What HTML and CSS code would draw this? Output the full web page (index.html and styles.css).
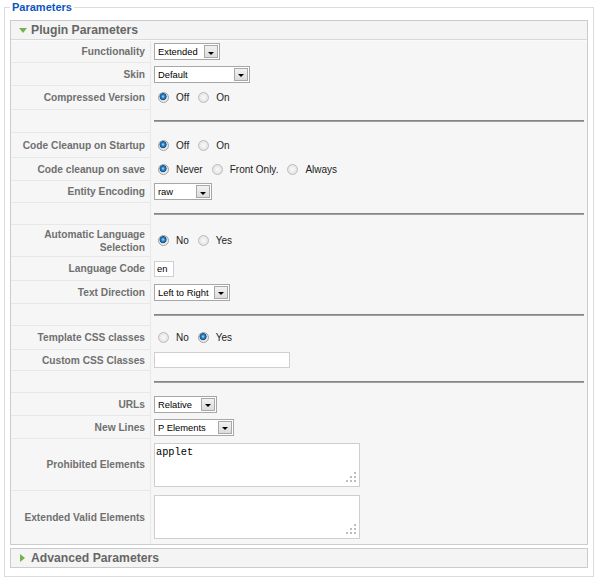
FILE: index.html
```html
<!DOCTYPE html>
<html>
<head>
<meta charset="utf-8">
<link rel="stylesheet" href="styles.css">
</head>
<body>
<fieldset class="params">
  <legend>Parameters</legend>
  <div class="panel">
    <h3 class="panel-title"><span class="tri tri-down"></span>Plugin Parameters</h3>
    <table class="paramlist">
      <tr class="h22"><td class="key">Functionality</td><td class="val"><span class="select w66"><span class="sel-text">Extended</span><span class="sel-btn"><span class="arrow"></span></span></span></td></tr>
      <tr class="h23"><td class="key">Skin</td><td class="val"><span class="select w96"><span class="sel-text">Default</span><span class="sel-btn"><span class="arrow"></span></span></span></td></tr>
      <tr class="h24"><td class="key">Compressed Version</td><td class="val radios"><input type="radio" class="radio" name="cv" checked><label>Off</label><input type="radio" class="radio" name="cv"><label>On</label></td></tr>
      <tr class="h23"><td class="key"></td><td class="val"><hr class="sep"></td></tr>
      <tr class="h25"><td class="key">Code Cleanup on Startup</td><td class="val radios"><input type="radio" class="radio" name="cs" checked><label>Off</label><input type="radio" class="radio" name="cs"><label>On</label></td></tr>
      <tr class="h23"><td class="key">Code cleanup on save</td><td class="val radios"><input type="radio" class="radio" name="cc" checked><label>Never</label><input type="radio" class="radio" name="cc"><label>Front Only.</label><input type="radio" class="radio" name="cc"><label>Always</label></td></tr>
      <tr class="h22"><td class="key">Entity Encoding</td><td class="val"><span class="select w58"><span class="sel-text">raw</span><span class="sel-btn"><span class="arrow"></span></span></span></td></tr>
      <tr class="h22"><td class="key"></td><td class="val"><hr class="sep"></td></tr>
      <tr class="h32"><td class="key">Automatic Language<br>Selection</td><td class="val radios low"><input type="radio" class="radio" name="al" checked><label>No</label><input type="radio" class="radio" name="al"><label>Yes</label></td></tr>
      <tr class="h24"><td class="key">Language Code</td><td class="val"><input type="text" class="text w20" value="en"></td></tr>
      <tr class="h23"><td class="key">Text Direction</td><td class="val"><span class="select w76"><span class="sel-text">Left to Right</span><span class="sel-btn"><span class="arrow"></span></span></span></td></tr>
      <tr class="h22"><td class="key"></td><td class="val"><hr class="sep"></td></tr>
      <tr class="h24"><td class="key">Template CSS classes</td><td class="val radios"><input type="radio" class="radio" name="tc"><label>No</label><input type="radio" class="radio" name="tc" checked><label>Yes</label></td></tr>
      <tr class="h21"><td class="key">Custom CSS Classes</td><td class="val"><input type="text" class="text w136" value=""></td></tr>
      <tr class="h22"><td class="key"></td><td class="val"><hr class="sep"></td></tr>
      <tr class="h23"><td class="key">URLs</td><td class="val"><span class="select w63"><span class="sel-text">Relative</span><span class="sel-btn"><span class="arrow"></span></span></span></td></tr>
      <tr class="h23"><td class="key">New Lines</td><td class="val"><span class="select w80"><span class="sel-text">P Elements</span><span class="sel-btn"><span class="arrow"></span></span></span></td></tr>
      <tr class="h52"><td class="key">Prohibited Elements</td><td class="val"><span class="ta-wrap"><textarea class="ta">applet</textarea><svg class="grip" width="12" height="12" viewBox="0 0 12 12"><rect x="9" y="1" width="2" height="2"/><rect x="5" y="5" width="2" height="2"/><rect x="9" y="5" width="2" height="2"/><rect x="1" y="9" width="2" height="2"/><rect x="5" y="9" width="2" height="2"/><rect x="9" y="9" width="2" height="2"/></svg></span></td></tr>
      <tr class="h53 last"><td class="key">Extended Valid Elements</td><td class="val"><span class="ta-wrap"><textarea class="ta"></textarea><svg class="grip" width="12" height="12" viewBox="0 0 12 12"><rect x="9" y="1" width="2" height="2"/><rect x="5" y="5" width="2" height="2"/><rect x="9" y="5" width="2" height="2"/><rect x="1" y="9" width="2" height="2"/><rect x="5" y="9" width="2" height="2"/><rect x="9" y="9" width="2" height="2"/></svg></span></td></tr>
    </table>
  </div>
  <div class="panel closed">
    <h3 class="panel-title"><span class="tri tri-right"></span>Advanced Parameters</h3>
  </div>
</fieldset>
</body>
</html>
```

FILE: styles.css
```css
html, body {
  margin: 0;
  background: #ffffff;
}
body {
  padding: 0 6px 0 4px;
  font-family: "Liberation Sans", Arial, sans-serif;
}
.params {
  margin: 0;
  padding: 6px 5px 5px 5px;
  border: 1px solid #dcdcdc;
  min-width: 0;
}
.params legend {
  padding: 0 2px;
  font-size: 11px;
  line-height: 14px;
  font-weight: bold;
  color: #0b55c4;
}
.panel {
  border: 1px solid #cccccc;
  margin-bottom: 3px;
  background: #f6f6f6;
}
.panel-title {
  margin: 0;
  height: 18px;
  line-height: 18px;
  padding-left: 20px;
  position: relative;
  font-size: 12.2px;
  font-weight: bold;
  color: #666666;
  background: #f4f4f4;
  border-bottom: 1px solid #d9d9d9;
}
.panel.closed .panel-title {
  border-bottom: 0;
}
.tri {
  position: absolute;
  width: 0;
  height: 0;
}
.tri-down {
  left: 8px;
  top: 7px;
  border-left: 4px solid transparent;
  border-right: 4px solid transparent;
  border-top: 5px solid #78b04f;
}
.tri-right {
  left: 9px;
  top: 5px;
  border-top: 4.5px solid transparent;
  border-bottom: 4.5px solid transparent;
  border-left: 5px solid #78b04f;
}
.paramlist {
  width: 100%;
  border-collapse: separate;
  border-spacing: 0;
  border-top: 1px solid #fbfbfb;
}
.paramlist td {
  padding: 0 3px;
  vertical-align: middle;
}
.paramlist td.key {
  width: 134px;
  padding: 0 5px 0 0;
  text-align: right;
  font-size: 10.2px;
  line-height: 13px;
  font-weight: bold;
  color: #707070;
  background: #f6f6f6;
  border-bottom: 1px solid #e8e8e8;
  border-right: 1px solid #e8e8e8;
}
.paramlist tr.last td.key { border-bottom: 0; }
.paramlist td.val {
  font-size: 10px;
  color: #222222;
  padding-bottom: 1px;
}
.h21 { height: 21px; }
.h22 { height: 22px; }
.h23 { height: 23px; }
.h24 { height: 24px; }
.h25 { height: 25px; }
.h32 { height: 32px; }
.h52 { height: 52px; }
.h53 { height: 53px; }

.select {
  display: inline-flex;
  align-items: center;
  justify-content: space-between;
  box-sizing: border-box;
  height: 17px;
  vertical-align: middle;
  background: #ffffff;
  border: 1px solid #a7a7a7;
  padding: 0 1px 0 3px;
  font-size: 9.4px;
  color: #000000;
}
.w66 { width: 66px; }
.w96 { width: 96px; }
.w58 { width: 58px; }
.w76 { width: 76px; }
.w63 { width: 63px; }
.w80 { width: 80px; }
.sel-btn {
  display: inline-flex;
  align-items: center;
  justify-content: center;
  box-sizing: border-box;
  width: 14px;
  height: 13px;
  border: 1px solid #a8a8a8;
  background: linear-gradient(#f2f2f2, #dcdcdc);
}
.arrow {
  width: 0;
  height: 0;
  margin-top: 3px;
  border-left: 3px solid transparent;
  border-right: 3px solid transparent;
  border-top: 3px solid #000000;
}
.radios {
  white-space: nowrap;
}
.radios label {
  display: inline-block;
  vertical-align: middle;
  margin-right: 5px;
}
.radio {
  -webkit-appearance: none;
  appearance: none;
  box-sizing: border-box;
  width: 11px;
  height: 11px;
  margin: 0 7px 0 4px;
  vertical-align: middle;
  border-radius: 50%;
  border: 1px solid #bcbcbc;
  background: radial-gradient(circle at 50% 50%, #fafafa 0, #e4e4e4 4.5px);
}
.radio:checked {
  background: radial-gradient(circle at 45% 40%, #a8dcfa 0, #2f8dd0 1.6px, #104f8a 3.2px, #d8d8d8 3.8px, #f2f2f2 5px);
  border-color: #a0a0a0;
}
.text {
  box-sizing: border-box;
  height: 16px;
  margin: 0;
  padding: 0 0 0 2px;
  vertical-align: middle;
  border: 1px solid #cfcfcf;
  background: #ffffff;
  font-family: "Liberation Sans", Arial, sans-serif;
  font-size: 9.4px;
  color: #000000;
  outline: none;
}
.w20 { width: 20px; }
.w136 { width: 136px; }
.sep {
  margin: 0;
  height: 0;
  border: 0;
  border-top: 1px solid #858585;
  border-bottom: 1px solid #a0a0a0;
}
.ta-wrap {
  position: relative;
  display: inline-block;
  vertical-align: middle;
}
.ta {
  display: block;
  box-sizing: border-box;
  width: 206px;
  height: 44px;
  margin: 0;
  padding: 2px 1px;
  border: 1px solid #cfcfcf;
  background: #ffffff;
  resize: none;
  font-family: "Liberation Mono", "Courier New", monospace;
  font-size: 10.3px;
  line-height: 12px;
  color: #000000;
  outline: none;
}
.grip {
  position: absolute;
  right: 3px;
  bottom: 4px;
  fill: #bdbdbd;
}
```
